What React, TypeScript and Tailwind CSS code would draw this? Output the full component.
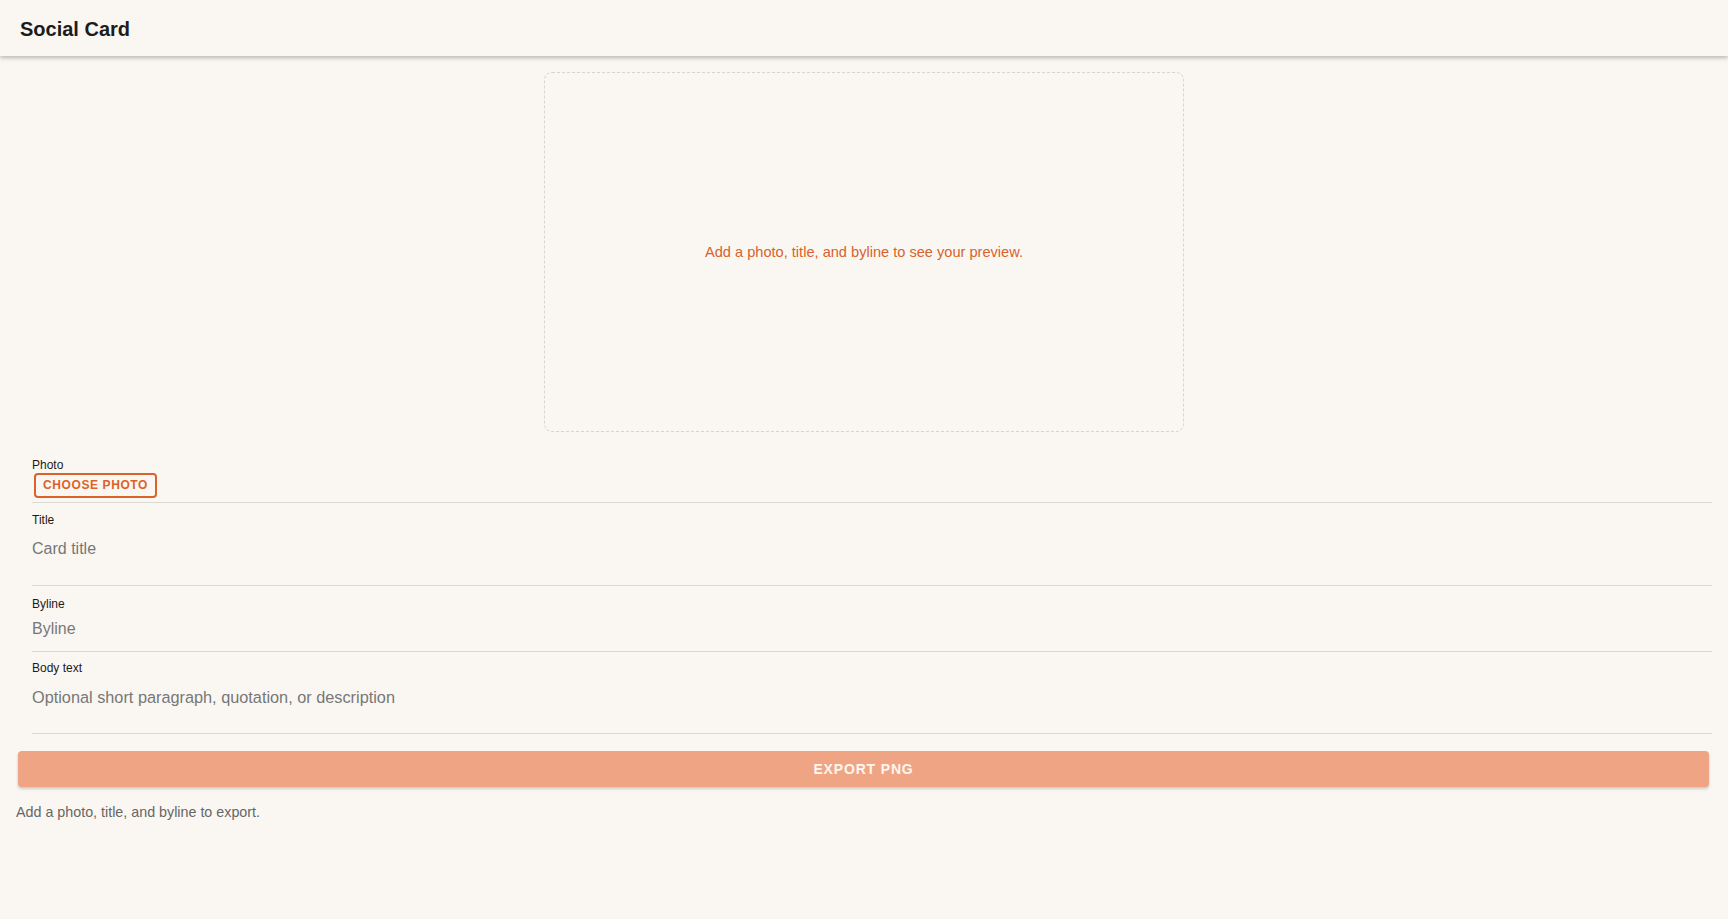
import React from 'react';

const labelCls = 'block text-xs leading-[14px] text-[#1a1a1a]';
const fieldCls =
    'block w-full bg-transparent text-base leading-6 text-[#1a1a1a] placeholder:text-[#777] focus:outline-none resize-none';

export default function App() {
    return (
        <div className="min-h-screen bg-[#faf7f2] font-['Liberation_Sans',Arial,sans-serif] text-[#1a1a1a]">
            <header className="h-14 px-5 flex items-center bg-[#faf7f2] shadow-[0_2px_4px_rgba(0,0,0,0.25)] relative">
                <h1 className="text-xl font-bold text-[#1c1c1c] pt-px">Social Card</h1>
            </header>

            <main className="px-4 pt-4">
                <div className="w-[640px] h-[360px] mx-auto rounded-lg border border-dashed border-[#d8d4ce] flex items-center justify-center">
                    <p className="text-[14.6px] text-[#d9622b] pt-px">Add a photo, title, and byline to see your preview.</p>
                </div>

                <form className="mt-[26px] pl-4">
                    <div className="border-b border-[#dcd9d4] pb-1">
                        <span className={labelCls}>Photo</span>
                        <button
                            type="button"
                            className="ml-0.5 h-[25px] px-[7px] rounded border-2 border-[#dd6229] text-[#dd6229] text-xs font-bold tracking-[0.05em] uppercase leading-none"
                        >
                            Choose photo
                        </button>
                    </div>

                    <div className="border-b border-[#dcd9d4] pt-[10px]">
                        <label className={labelCls}>Title</label>
                        <textarea rows={2} placeholder="Card title" className={`${fieldCls} mt-[10px] h-[48px]`} />
                    </div>

                    <div className="border-b border-[#dcd9d4] pt-[11px] pb-[10px]">
                        <label className={labelCls}>Byline</label>
                        <input type="text" placeholder="Byline" className={`${fieldCls} mt-[6px] h-6`} />
                    </div>

                    <div className="border-b border-[#dcd9d4] pt-[9px]">
                        <label className={labelCls}>Body text</label>
                        <textarea
                            rows={2}
                            placeholder="Optional short paragraph, quotation, or description"
                            className={`${fieldCls} mt-[10px] h-[48px] text-[16.3px]`}
                        />
                    </div>
                </form>

                <button
                    type="button"
                    disabled
                    className="mt-[17px] ml-0.5 w-[calc(100%-5px)] h-9 rounded bg-[#efa583] text-[#fdf5ef] text-sm font-bold tracking-[0.06em] uppercase shadow-[0_2px_3px_rgba(0,0,0,0.18)]"
                >
                    Export PNG
                </button>

                <p className="mt-[15px] text-[14.3px] leading-5 text-[#666]">Add a photo, title, and byline to export.</p>
            </main>
        </div>
    );
}
